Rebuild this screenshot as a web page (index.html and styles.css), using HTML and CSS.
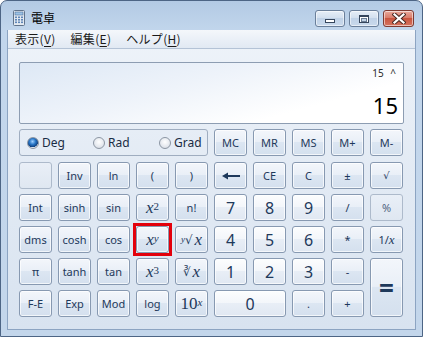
FILE: index.html
```html
<!DOCTYPE html>
<html lang="ja">
<head>
<meta charset="utf-8">
<title>電卓</title>
<link rel="stylesheet" href="styles.css">
</head>
<body>
<div class="window">
  <div class="titlebar">
    <svg class="appicon" width="16" height="16" viewBox="0 0 16 16">
      <rect x="2.5" y="0.5" width="11" height="15" rx="1" fill="#e4eaf1" stroke="#61748c"/>
      <rect x="4" y="2" width="8" height="3" fill="#9cc2e6" stroke="#4f7299" stroke-width="0.6"/>
      <g fill="#5f86b8">
        <rect x="4" y="6.5" width="2" height="1.6"/><rect x="7" y="6.5" width="2" height="1.6"/><rect x="10" y="6.5" width="2" height="1.6"/>
        <rect x="4" y="9" width="2" height="1.6"/><rect x="7" y="9" width="2" height="1.6"/><rect x="10" y="9" width="2" height="1.6"/>
        <rect x="4" y="11.5" width="2" height="1.6"/><rect x="7" y="11.5" width="2" height="1.6"/><rect x="10" y="11.5" width="2" height="1.6"/>
      </g>
    </svg>
    <span class="title">電卓</span>
    <div class="caption">
      <div class="cbtn"><span class="min-glyph"></span></div>
      <div class="cbtn"><span class="max-glyph"></span></div>
      <div class="cbtn close">
        <svg width="14" height="11" viewBox="0 0 14 11">
          <path d="M2.5 1.5 L11.5 9.5 M11.5 1.5 L2.5 9.5" stroke="#4a2a24" stroke-width="4.2" stroke-linecap="square"/>
          <path d="M2.5 1.5 L11.5 9.5 M11.5 1.5 L2.5 9.5" stroke="#ffffff" stroke-width="2.2" stroke-linecap="square"/>
        </svg>
      </div>
    </div>
  </div>
  <div class="client">
    <div class="menubar">
      <span class="menuitem">表示(<u>V</u>)</span>
      <span class="menuitem">編集(<u>E</u>)</span>
      <span class="menuitem">ヘルプ(<u>H</u>)</span>
    </div>
    <div class="main">
      <div class="display">
        <div class="expr">15 ^</div>
        <div class="value">15</div>
      </div>
      <div class="toprow">
        <div class="angle">
          <label class="radio"><span class="dot on"></span>Deg</label>
          <label class="radio"><span class="dot"></span>Rad</label>
          <label class="radio"><span class="dot"></span>Grad</label>
        </div>
        <div class="k">MC</div>
        <div class="k">MR</div>
        <div class="k">MS</div>
        <div class="k">M+</div>
        <div class="k">M-</div>
      </div>
      <div class="keys">
        <div class="k off"></div>
        <div class="k">Inv</div>
        <div class="k">ln</div>
        <div class="k">(</div>
        <div class="k">)</div>
        <div class="k"><svg width="18" height="8" viewBox="0 0 18 8"><path d="M0 4 L6 0.5 L6 7.5 Z" fill="#1e395b"/><rect x="5" y="3" width="13" height="2" fill="#1e395b"/></svg></div>
        <div class="k">CE</div>
        <div class="k">C</div>
        <div class="k">±</div>
        <div class="k sym">√</div>

        <div class="k">Int</div>
        <div class="k">sinh</div>
        <div class="k">sin</div>
        <div class="k m"><i>x</i><sup>2</sup></div>
        <div class="k">n!</div>
        <div class="k n">7</div>
        <div class="k n">8</div>
        <div class="k n">9</div>
        <div class="k">/</div>
        <div class="k off">%</div>

        <div class="k">dms</div>
        <div class="k">cosh</div>
        <div class="k">cos</div>
        <div class="k m hl"><i>x</i><sup><i>y</i></sup></div>
        <div class="k m"><sup class="idx"><i>y</i></sup><span class="rad">√</span><i class="sp">x</i></div>
        <div class="k n">4</div>
        <div class="k n">5</div>
        <div class="k n">6</div>
        <div class="k">*</div>
        <div class="k">1/<i class="mi">x</i></div>

        <div class="k">π</div>
        <div class="k">tanh</div>
        <div class="k">tan</div>
        <div class="k m"><i>x</i><sup>3</sup></div>
        <div class="k m"><span class="rad">∛</span><i class="sp">x</i></div>
        <div class="k n">1</div>
        <div class="k n">2</div>
        <div class="k n">3</div>
        <div class="k">-</div>
        <div class="k eq">=</div>

        <div class="k">F-E</div>
        <div class="k">Exp</div>
        <div class="k">Mod</div>
        <div class="k">log</div>
        <div class="k m">10<sup><i>x</i></sup></div>
        <div class="k n zero">0</div>
        <div class="k">.</div>
        <div class="k">+</div>
      </div>
    </div>
  </div>
</div>
</body>
</html>
```

FILE: styles.css
```css
* { box-sizing: border-box; }

body {
  margin: 0;
  background: #ffffff;
  font-family: "Noto Sans", "Noto Sans CJK JP", sans-serif;
}

.window {
  width: 423px;
  height: 337px;
  border: 1px solid #4d6585;
  border-radius: 7px 7px 0 0;
  background: linear-gradient(to bottom, #b3cae4 0px, #c2d6ec 30px, #c3d6eb 100%);
  display: flex;
  flex-direction: column;
  padding: 0 6px 6px 6px;
  overflow: hidden;
}

.titlebar {
  height: 29px;
  display: flex;
  align-items: flex-start;
  padding-top: 9px;
}

.appicon {
  margin-left: 4px;
  flex: none;
}

.title {
  margin-left: 4px;
  font-family: "Noto Sans CJK JP", sans-serif;
  font-size: 12px;
  line-height: 16px;
  color: #000000;
}

.caption {
  margin-left: auto;
  margin-right: 2px;
  display: flex;
  gap: 4px;
}

.cbtn {
  width: 30px;
  height: 17px;
  border: 1px solid #6a7f9a;
  border-radius: 3px;
  background: linear-gradient(to bottom, #e6eef7 0%, #d3e0ef 45%, #c0d2e7 50%, #c9d9ec 100%);
  box-shadow: inset 0 0 0 1px rgba(255, 255, 255, 0.55);
  display: flex;
  align-items: center;
  justify-content: center;
}

.cbtn.close {
  width: 31px;
  border-color: #7e3a31;
  background: linear-gradient(to bottom, #e9a99b 0%, #d97c6a 45%, #c9553f 50%, #d5735f 100%);
}

.min-glyph {
  width: 10px;
  height: 4px;
  margin-top: 5px;
  background: #ffffff;
  border: 1px solid #36465c;
}

.max-glyph {
  width: 10px;
  height: 8px;
  background: #ffffff;
  border: 1px solid #36465c;
  border-top-width: 2px;
}

.max-glyph::after {
  content: "";
  display: block;
  width: 4px;
  height: 2px;
  margin: 1px auto 0;
  background: #c4d4e6;
  border: 1px solid #6b7d94;
}

.client {
  flex: 1;
  border: 1px solid #8ca4c2;
  border-top: none;
  background: linear-gradient(to bottom, #eef3f9 0%, #e2eaf4 50%, #d8e3f0 100%);
  display: flex;
  flex-direction: column;
}

.menubar {
  height: 19px;
  flex: none;
  display: flex;
  padding-left: 7px;
  background: linear-gradient(to bottom, #f4f7fb, #e1e9f3);
  border-bottom: 1px solid #b4c3d6;
  font-family: "Noto Sans CJK JP", sans-serif;
  font-size: 12px;
  line-height: 18px;
  color: #1a1a1a;
}

.menuitem {
  padding: 0 8px 0 0;
  margin-right: 7px;
  letter-spacing: 0.3px;
}

.menuitem u {
  text-decoration-thickness: 1px;
  text-underline-offset: 2px;
}

.main {
  padding: 13px 11px 0 11px;
}

.display {
  width: 385px;
  height: 62px;
  border: 1px solid #8d9db2;
  border-radius: 2px;
  background: linear-gradient(165deg, #dde8f5 0%, #eef3fa 40%, #ffffff 75%);
}

.expr {
  margin-top: 4px;
  padding-right: 7px;
  text-align: right;
  font-size: 10px;
  line-height: 12px;
  word-spacing: 4px;
  color: #2a2a2a;
}

.value {
  margin-top: 13px;
  padding-right: 5px;
  text-align: right;
  font-size: 22px;
  line-height: 26px;
  color: #000000;
}

.toprow {
  display: grid;
  grid-template-columns: repeat(10, 33px);
  grid-template-rows: 27px;
  column-gap: 6px;
  margin-top: 5px;
}

.angle {
  grid-column: 1 / span 5;
  border: 1px solid #9fadc0;
  border-radius: 3px;
  display: flex;
  align-items: center;
  padding-left: 7px;
  overflow: hidden;
}

.radio {
  flex: none;
  width: 66px;
  display: flex;
  align-items: center;
  gap: 3px;
  font-size: 12px;
  color: #1a2c44;
}

.radio:last-child {
  width: auto;
}

.dot {
  flex: none;
  width: 12px;
  height: 12px;
  border-radius: 50%;
  border: 1px solid #8c96a3;
  background: radial-gradient(circle at 50% 40%, #ffffff 0%, #e4e8ee 60%, #cdd3db 100%);
}

.dot.on {
  background: radial-gradient(circle at 45% 35%, #9fd0ff 0%, #2a78c8 35%, #0f3f7e 65%, #dfe5ec 70%, #f4f6f9 100%);
}

.keys {
  display: grid;
  grid-template-columns: repeat(10, 33px);
  grid-template-rows: repeat(5, 27px);
  gap: 5px 6px;
  margin-top: 6px;
}

.k {
  border: 1px solid #8799b1;
  border-radius: 3px;
  background: linear-gradient(to bottom, #f3f6fb 0%, #e9eff7 48%, #dce6f2 50%, #d4e0ee 100%);
  box-shadow: inset 0 0 0 1px rgba(255, 255, 255, 0.7);
  display: flex;
  align-items: center;
  justify-content: center;
  font-size: 11px;
  color: #1e395b;
  white-space: nowrap;
}

.k.sym {
  font-family: "DejaVu Sans", sans-serif;
  font-size: 10px;
}

.k.n {
  background: linear-gradient(to bottom, #fcfdfe 0%, #f3f6fa 48%, #e8eef6 50%, #e0e8f2 100%);
  font-size: 16px;
}

.k.off {
  border-color: #adbacb;
  background: linear-gradient(to bottom, #e9eff7, #dfe7f1);
  box-shadow: none;
  color: #51657f;
}

.k.m {
  font-family: "Liberation Serif", "DejaVu Serif", serif;
  font-size: 17px;
}

.k sup {
  font-size: 11px;
  position: relative;
  top: -2px;
  vertical-align: super;
  line-height: 0;
}

.k.m sup.idx {
  font-size: 9px;
  top: -1px;
}

.k .rad {
  font-family: "DejaVu Sans", sans-serif;
  font-size: 12px;
}

.k .sp {
  margin-left: 2px;
}

.k .mi {
  font-family: "Liberation Serif", serif;
  font-size: 13px;
}

.k.hl {
  position: relative;
}

.k.hl::after {
  content: "";
  position: absolute;
  inset: -4px;
  border: 3px solid #e3000b;
}

.k.eq {
  grid-row: span 2;
  font-size: 26px;
  font-weight: 700;
  line-height: 1;
}

.k.zero {
  grid-column: span 2;
}
```
